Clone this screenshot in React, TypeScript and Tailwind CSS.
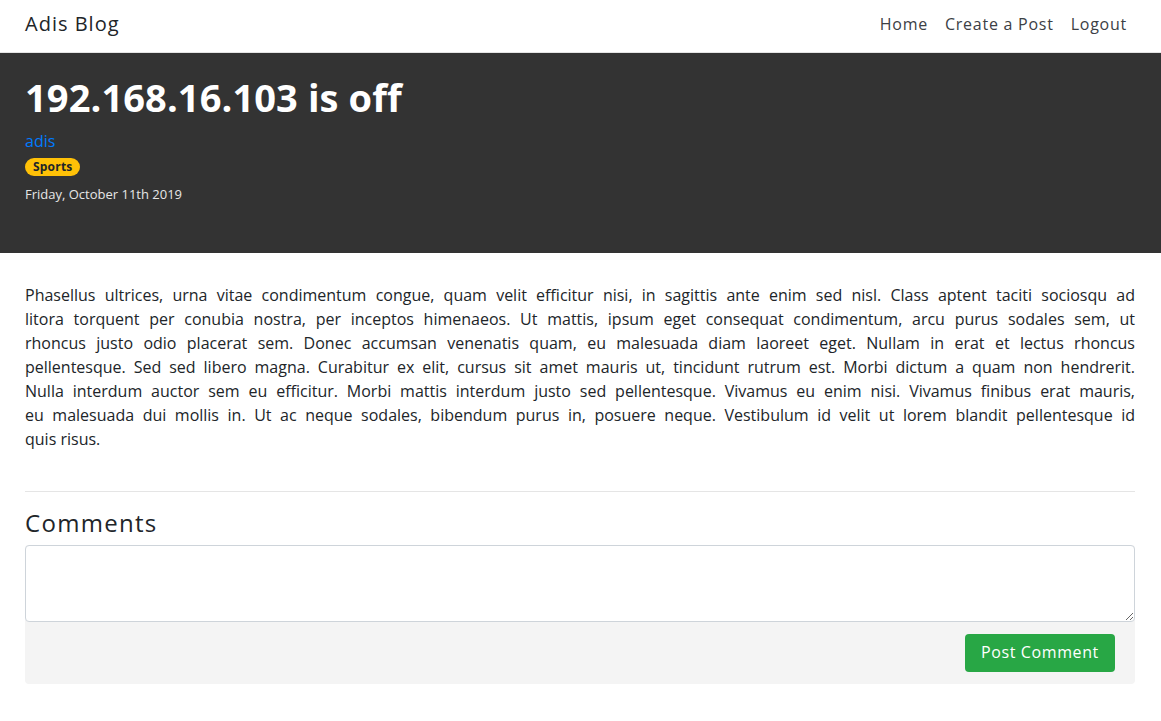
const lines = [
  "Phasellus ultrices, urna vitae condimentum congue, quam velit efficitur nisi, in sagittis ante enim sed nisl. Class aptent taciti sociosqu ad",
  "litora torquent per conubia nostra, per inceptos himenaeos. Ut mattis, ipsum eget consequat condimentum, arcu purus sodales sem, ut",
  "rhoncus justo odio placerat sem. Donec accumsan venenatis quam, eu malesuada diam laoreet eget. Nullam in erat et lectus rhoncus",
  "pellentesque. Sed sed libero magna. Curabitur ex elit, cursus sit amet mauris ut, tincidunt rutrum est. Morbi dictum a quam non hendrerit.",
  "Nulla interdum auctor sem eu efficitur. Morbi mattis interdum justo sed pellentesque. Vivamus eu enim nisi. Vivamus finibus erat mauris,",
  "eu malesuada dui mollis in. Ut ac neque sodales, bibendum purus in, posuere neque. Vestibulum id velit ut lorem blandit pellentesque id",
];

export default function App() {
  return (
    <div className="min-h-[721px] bg-white font-['Open_Sans',sans-serif] text-[#212529]">
      {/* Navbar */}
      <header className="h-[53px] border-b border-[#e5e5e5] bg-white">
        <nav className="flex h-[52px] w-full items-center justify-between pl-[25px] pr-[26px] pb-[4px]">
          <span className="text-[20px] tracking-[1px] text-[#212529]">Adis Blog</span>
          <ul className="flex items-center gap-[17px] pr-[8px] text-[16px] tracking-[0.75px] text-[#3c4045]">
            <li>Home</li>
            <li>Create a Post</li>
            <li>Logout</li>
          </ul>
        </nav>
      </header>

      {/* Jumbotron */}
      <section className="h-[200px] bg-[#333333]">
        <div className="w-full pl-[25px] pr-[26px] pt-[20px]">
          <h1 className="text-[38px] font-bold leading-[48px] tracking-[0.1px] text-white">
            192.168.16.103 is off
          </h1>
          <a className="mt-[8px] block text-[16px] leading-[24px] text-[#007bff]">adis</a>
          <span className="mt-[3px] inline-block rounded-full bg-[#ffc107] px-[8px] text-[12px] font-bold leading-[18px] tracking-[0.2px] text-[#212529]">
            Sports
          </span>
          <p className="mt-[7px] text-[13px] leading-[20px] text-[#e6e6e6]">Friday, October 11th 2019</p>
        </div>
      </section>

      <main className="w-full pl-[25px] pr-[26px] pt-[30px]">
        <div className="text-[16px] leading-[24px] text-[#212529]">
          {lines.map((l) => (
            <div key={l} className="whitespace-nowrap text-justify [text-align-last:justify]">
              {l}
            </div>
          ))}
          <div>quis risus.</div>
        </div>

        <hr className="mt-[40px] border-t border-[#e5e5e5]" />

        <h2 className="mt-[16px] text-[24px] leading-[29px] tracking-[1.3px]">Comments</h2>

        <div className="mt-[8px] rounded-[4px] bg-[#f4f4f4]">
          <textarea className="block h-[77px] w-full rounded-[4px] border border-[#ced4da] bg-white px-3 py-2 outline-none" />
          <div className="flex h-[62px] items-center justify-end pr-[20px]">
            <button className="h-[38px] w-[150px] rounded-[4px] bg-[#28a745] pb-[2px] text-[16px] tracking-[0.6px] text-white">
              Post Comment
            </button>
          </div>
        </div>
      </main>
    </div>
  );
}
